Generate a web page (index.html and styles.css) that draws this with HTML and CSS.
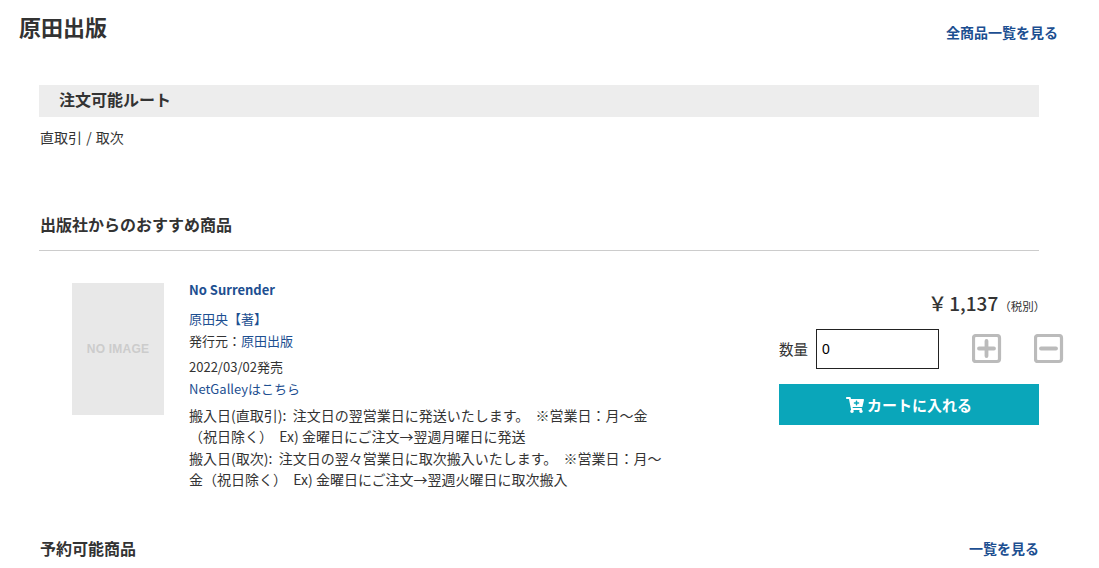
FILE: index.html
```html
<!DOCTYPE html>
<html lang="ja">
	<head>
		<meta charset="UTF-8">
		<title>原田出版</title>
		<link rel="stylesheet" href="styles.css">
	</head>
	<body>
		<div class="head">
			<h1 class="head_title">原田出版</h1>
			<a href="#" class="more head_more">全商品一覧を見る</a>
		</div>
		<div class="content">
			<h2 class="route_title">注文可能ルート</h2>
			<p class="route_text">直取引 / 取次</p>

			<div class="sec_head rec_head">
				<h2 class="sec_title">出版社からのおすすめ商品</h2>
			</div>

			<div class="item">
				<div class="noimage">NO IMAGE</div>
				<div class="info">
					<a href="#" class="info_name">No Surrender</a>
					<p class="info_author"><a href="#">原田央</a><a href="#" class="role">【著】</a></p>
					<p class="info_pub">発行元：<a href="#">原田出版</a></p>
					<p class="info_date">2022/03/02発売</p>
					<p class="info_net"><a href="#">NetGalleyはこちら</a></p>
					<p class="info_note">搬入日(直取引):&nbsp; 注文日の翌営業日に発送いたします。&nbsp; ※営業日：月～金（祝日除く）&nbsp; Ex) 金曜日にご注文→翌週月曜日に発送</p>
					<p class="info_note">搬入日(取次):&nbsp; 注文日の翌々営業日に取次搬入いたします。&nbsp; ※営業日：月～金（祝日除く）&nbsp; Ex) 金曜日にご注文→翌週火曜日に取次搬入</p>
				</div>
				<div class="buy">
					<div class="price"><b>￥ 1,137</b><small>（税別）</small></div>
					<div class="qty">
						<label class="qty_label" for="qty">数量</label>
						<input class="qty_input" id="qty" type="text" value="0">
						<a href="#" class="qty_btn qty_plus">
							<svg width="30" height="30" viewBox="0 0 30 30"><rect x="1.5" y="1.5" width="26" height="26" rx="2.5" fill="none" stroke="#bbb" stroke-width="3.2"/><path d="M14.5 7v15M7 14.5h15" stroke="#bbb" stroke-width="3.8" stroke-linecap="round" fill="none"/></svg>
						</a>
						<a href="#" class="qty_btn">
							<svg width="30" height="30" viewBox="0 0 30 30"><rect x="1.5" y="1.5" width="26" height="26" rx="2.5" fill="none" stroke="#bbb" stroke-width="3.2"/><path d="M7 14.5h15" stroke="#bbb" stroke-width="3.8" stroke-linecap="round" fill="none"/></svg>
						</a>
					</div>
					<a href="#" class="cart">
						<svg width="18" height="16" viewBox="0 0 576 512"><path fill="#fff" d="M504.717 320H211.572l6.545 32h268.418c15.401 0 26.816 14.301 23.403 29.319l-5.517 24.276C523.112 414.668 536 433.828 536 456c0 31.202-25.519 56.444-56.824 55.994-29.823-.429-54.35-24.631-55.155-54.447-.44-16.287 6.085-31.049 16.803-41.548H231.176C241.553 426.165 248 440.326 248 456c0 31.81-26.528 57.426-58.67 55.933-28.54-1.325-51.751-24.385-53.251-52.917-1.158-22.034 10.436-41.455 28.051-51.586L93.883 64H24C10.745 64 0 53.255 0 40V24C0 10.745 10.745 0 24 0h102.529c11.401 0 21.228 8.021 23.513 19.19L159.208 64H551.99c15.401 0 26.816 14.301 23.403 29.319l-47.273 208C525.637 312.246 515.923 320 504.717 320zM408 168h-48v-40c0-8.837-7.163-16-16-16h-16c-8.837 0-16 7.163-16 16v40h-48c-8.837 0-16 7.163-16 16v16c0 8.837 7.163 16 16 16h48v40c0 8.837 7.163 16 16 16h16c8.837 0 16-7.163 16-16v-40h48c8.837 0 16-7.163 16-16v-16c0-8.837-7.163-16-16-16z"/></svg>
						カートに入れる
					</a>
				</div>
			</div>

			<div class="sec_head">
				<h2 class="sec_title">予約可能商品</h2>
				<a href="#" class="more">一覧を見る</a>
			</div>
		</div>
	</body>
</html>
```

FILE: styles.css
```css
*{
    box-sizing: border-box;
}
html, body{
    height: 568px;
    overflow: hidden;
}
body{
    margin: 0;
    font-family: "Noto Sans CJK JP", "Noto Sans", sans-serif;
    font-size: 13px;
    color: #333;
    background: #fff;
}
a{
    color: #1d4f91;
    text-decoration: none;
}
p, h1, h2{
    margin: 0;
}
.head{
    display: flex;
    justify-content: space-between;
    height: 85px;
    padding: 10px 41px 0 19px;
}
.head_title{
    font-size: 22px;
    font-weight: 700;
    line-height: 32px;
}
.more{
    font-size: 14px;
    font-weight: 700;
    color: #1d4f91;
}
.head_more{
    margin-top: 13px;
    line-height: 18px;
}
.content{
    width: 1000px;
    margin-left: 39px;
}
.route_title{
    height: 32px;
    padding-left: 20px;
    font-size: 16px;
    font-weight: 700;
    line-height: 29px;
    background: #ededed;
}
.route_text{
    margin-top: 10px;
    padding-left: 1px;
    font-size: 14px;
    line-height: 20px;
    word-spacing: 1px;
}
.sec_head{
    display: flex;
    justify-content: space-between;
    align-items: center;
    padding-left: 1px;
}
.rec_head{
    height: 42px;
    margin-top: 62px;
    border-bottom: 1px solid #ccc;
    padding-bottom: 12px;
}
.sec_title{
    font-size: 16px;
    font-weight: 700;
    line-height: 24px;
}
.item{
    display: flex;
    height: 285px;
    padding: 32px 0 0 33px;
}
.noimage{
    flex: none;
    width: 92px;
    height: 132px;
    font-family: "Liberation Sans", sans-serif;
    font-size: 12px;
    font-weight: 700;
    letter-spacing: .2px;
    line-height: 132px;
    text-align: center;
    color: #ccc;
    background: #e8e8e8;
}
.info{
    flex: none;
    width: 473px;
    margin-left: 25px;
    font-size: 13px;
    line-height: 20px;
}
.info_name{
    display: block;
    font-size: 13px;
    font-weight: 700;
    line-height: 14px;
}
.info_author{
    margin-top: 12px;
}
.info_pub{
    margin-top: 2px;
}
.info_date{
    margin-top: 6px;
}
.info_net{
    margin-top: 2px;
}
.info_note{
    margin-top: 2px;
    font-size: 14px;
    line-height: 20.5px;
}
.info_net + .info_note{
    margin-top: 6px;
}
.buy{
    flex: none;
    width: 260px;
    margin-left: 117px;
}
.price{
    padding-left: 149px;
    white-space: nowrap;
    line-height: 28px;
    margin-top: 6px;
}
.price b{
    font-size: 19px;
    font-weight: 500;
    word-spacing: -2px;
}
.price small{
    margin-left: 1px;
    font-size: 11.5px;
}
.qty{
    display: flex;
    align-items: center;
    width: 290px;
    height: 40px;
    margin-top: 9px;
}
.qty_label{
    flex: none;
    width: 37px;
    font-size: 14.5px;
    line-height: 38px;
    white-space: nowrap;
}
.qty_input{
    flex: none;
    width: 123px;
    height: 40px;
    margin-right: 33px;
    padding: 0 5px;
    border: 1px solid #222;
    border-radius: 0;
    font-family: "Liberation Sans", sans-serif;
    font-size: 14px;
    color: #000;
}
.qty_btn{
    display: block;
    height: 30px;
    margin-right: 32px;
}
.cart{
    display: flex;
    justify-content: center;
    align-items: center;
    gap: 3px;
    height: 41px;
    margin-top: 15px;
    font-size: 15px;
    font-weight: 700;
    color: #fff;
    background: #0aa6ba;
}
```
